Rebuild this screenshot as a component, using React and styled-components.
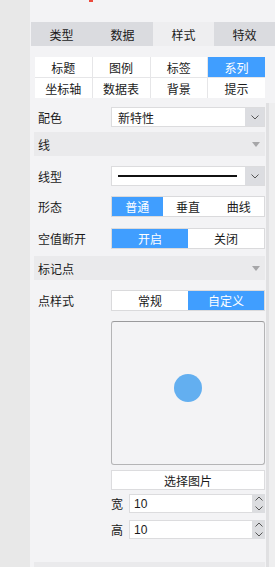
import React from 'react';
import styled, { createGlobalStyle } from 'styled-components';

const GlobalStyle = createGlobalStyle`
  html, body {
    margin: 0;
    padding: 0;
  }
  body {
    font-family: "Noto Sans CJK SC", "Microsoft YaHei", sans-serif;
    font-size: 12px;
    color: #1a1a1a;
    background: #e8e8e8;
  }
  * {
    box-sizing: border-box;
  }
`;

const Page = styled.div`
  display: flex;
  height: 567px;
  overflow: hidden;
`;

const Rail = styled.div`
  width: 30px;
  flex-shrink: 0;
  background: #e8e8e8;
`;

const Panel = styled.div`
  flex: 1;
  min-width: 0;
  display: flex;
  flex-direction: column;
  background: #f3f3f5;
`;

const TopStrip = styled.div`
  height: 22px;
`;

const RedMark = styled.div`
  width: 4px;
  height: 2px;
  margin-left: 59px;
  background: #ec4a3c;
`;

const Tabs = styled.div`
  display: grid;
  grid-template-columns: repeat(4, 1fr);
  height: 24px;
  margin-left: 1px;
  background: #dadbdf;
`;

const Tab = styled.div`
  display: flex;
  align-items: center;
  justify-content: center;
  background: ${(p) => (p.$active ? '#eeeef0' : 'transparent')};
`;

const SubGrid = styled.div`
  display: grid;
  grid-template-columns: repeat(4, 1fr);
  grid-auto-rows: 20px;
  gap: 1px;
  margin: 11px 10px 0 5px;
  background: #e6e6e8;
`;

const SubCell = styled.div`
  display: flex;
  align-items: center;
  justify-content: center;
  background: ${(p) => (p.$active ? '#409eff' : '#fff')};
  color: ${(p) => (p.$active ? '#fff' : '#1a1a1a')};
`;

const ScrollArea = styled.div`
  flex: 1;
  display: flex;
  margin-top: 5px;
  min-height: 0;
`;

const Content = styled.div`
  flex: 1;
  padding: 4px 1px 0 4px;
`;

const Track = styled.div`
  width: 9px;
  flex-shrink: 0;
  border-left: 3px solid #e0e0e2;
  background: #eeeeef;
`;

const Row = styled.div`
  display: flex;
  align-items: center;
  margin-top: ${(p) => p.$mt || 0}px;
`;

const Label = styled.div`
  width: 77px;
  flex-shrink: 0;
  padding-left: 4px;
`;

const Indent = styled.div`
  margin-top: ${(p) => p.$mt || 0}px;
  margin-left: 77px;
`;

const Select = styled.div`
  flex: 1;
  display: flex;
  height: 20px;
  border: 1px solid #dcdcde;
  background: #fff;
`;

const SelectValue = styled.div`
  flex: 1;
  display: flex;
  align-items: center;
  padding: 0 8px 0 6px;
`;

const LineSample = styled.div`
  flex: 1;
  height: 2px;
  background: #111;
`;

const ArrowBox = styled.div`
  width: 19px;
  flex-shrink: 0;
  display: flex;
  align-items: center;
  justify-content: center;
  background: #dcdde1;
`;

const SectionHeader = styled.div`
  display: flex;
  align-items: center;
  justify-content: space-between;
  height: 24px;
  margin-top: ${(p) => p.$mt || 0}px;
  padding: 0 5px 0 4px;
  background: #eaeaec;
`;

const Segmented = styled.div`
  flex: 1;
  display: grid;
  grid-template-columns: repeat(${(p) => p.$count}, 1fr);
  height: 21px;
  border: 1px solid #dadadc;
  background: #fff;
`;

const Segment = styled.div`
  display: flex;
  align-items: center;
  justify-content: center;
  background: ${(p) => (p.$active ? '#409eff' : '#fff')};
  color: ${(p) => (p.$active ? '#fff' : '#1a1a1a')};
`;

const Canvas = styled.div`
  height: 144px;
  display: flex;
  align-items: center;
  justify-content: center;
  padding-bottom: 10px;
  border: 1px solid #b4b4b6;
  border-top-color: #9a9a9c;
  border-radius: 3px;
  background: #f3f3f5;
`;

const Dot = styled.div`
  width: 28px;
  height: 28px;
  border-radius: 50%;
  background: #63aff0;
`;

const PickButton = styled.div`
  height: 20px;
  display: flex;
  align-items: center;
  justify-content: center;
  border: 1px solid #dcdcde;
  background: #fff;
`;

const SizeRow = styled.div`
  display: flex;
  align-items: center;
  height: 19px;
  margin-top: ${(p) => p.$mt || 0}px;
`;

const SizeLabel = styled.div`
  width: 18px;
  flex-shrink: 0;
`;

const NumberInput = styled.div`
  flex: 1;
  height: 100%;
  display: flex;
  align-items: center;
  padding-left: 4px;
  border: 1px solid #dcdcde;
  border-right: none;
  background: #fff;
  font-family: "Liberation Sans", Arial, sans-serif;
  font-size: 12px;
`;

const Spinner = styled.div`
  width: 13px;
  height: 100%;
  flex-shrink: 0;
  display: flex;
  flex-direction: column;
  align-items: center;
  justify-content: space-around;
  background: #dcdde0;
`;

const Chevron = ({ up }) => (
  <svg width="8" height="5" viewBox="0 0 8 5">
    <path
      d={up ? 'M0.5 4.5 L4 1 L7.5 4.5' : 'M0.5 0.5 L4 4 L7.5 0.5'}
      fill="none"
      stroke="#555"
      strokeWidth="1"
    />
  </svg>
);

const Caret = () => (
  <svg width="8" height="5" viewBox="0 0 8 5">
    <path d="M0 0 H8 L4 5 Z" fill="#a6a6a8" />
  </svg>
);

const topTabs = ['类型', '数据', '样式', '特效'];
const subTabs = ['标题', '图例', '标签', '系列', '坐标轴', '数据表', '背景', '提示'];

const Toggle = ({ options, active }) => (
  <Segmented $count={options.length}>
    {options.map((o) => (
      <Segment key={o} $active={o === active}>
        {o}
      </Segment>
    ))}
  </Segmented>
);

const App = () => (
  <>
    <GlobalStyle />
    <Page>
      <Rail />
      <Panel>
        <TopStrip>
          <RedMark />
        </TopStrip>
        <Tabs>
          {topTabs.map((t) => (
            <Tab key={t} $active={t === '样式'}>
              {t}
            </Tab>
          ))}
        </Tabs>
        <SubGrid>
          {subTabs.map((t) => (
            <SubCell key={t} $active={t === '系列'}>
              {t}
            </SubCell>
          ))}
        </SubGrid>
        <ScrollArea>
          <Content>
            <Row>
              <Label>配色</Label>
              <Select>
                <SelectValue>新特性</SelectValue>
                <ArrowBox>
                  <Chevron />
                </ArrowBox>
              </Select>
            </Row>

            <SectionHeader $mt={5}>
              线
              <Caret />
            </SectionHeader>

            <Row $mt={10}>
              <Label>线型</Label>
              <Select>
                <SelectValue>
                  <LineSample />
                </SelectValue>
                <ArrowBox>
                  <Chevron />
                </ArrowBox>
              </Select>
            </Row>
            <Row $mt={10}>
              <Label>形态</Label>
              <Toggle options={['普通', '垂直', '曲线']} active="普通" />
            </Row>
            <Row $mt={11}>
              <Label>空值断开</Label>
              <Toggle options={['开启', '关闭']} active="开启" />
            </Row>

            <SectionHeader $mt={7}>
              标记点
              <Caret />
            </SectionHeader>

            <Row $mt={10}>
              <Label>点样式</Label>
              <Toggle options={['常规', '自定义']} active="自定义" />
            </Row>
            <Indent $mt={10}>
              <Canvas>
                <Dot />
              </Canvas>
            </Indent>
            <Indent $mt={5}>
              <PickButton>选择图片</PickButton>
            </Indent>
            <Indent $mt={4}>
              <SizeRow>
                <SizeLabel>宽</SizeLabel>
                <NumberInput>10</NumberInput>
                <Spinner>
                  <Chevron up />
                  <Chevron />
                </Spinner>
              </SizeRow>
              <SizeRow $mt={7}>
                <SizeLabel>高</SizeLabel>
                <NumberInput>10</NumberInput>
                <Spinner>
                  <Chevron up />
                  <Chevron />
                </Spinner>
              </SizeRow>
            </Indent>

            <SectionHeader $mt={23} />
          </Content>
          <Track />
        </ScrollArea>
      </Panel>
    </Page>
  </>
);

export default App;
